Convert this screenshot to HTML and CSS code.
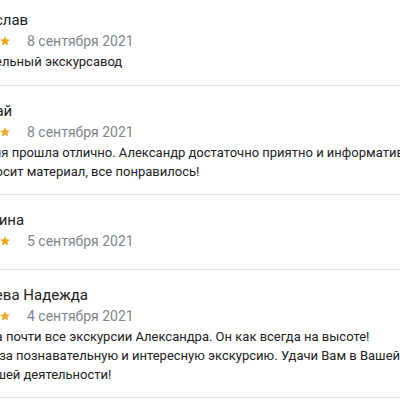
FILE: index.html
```html
<!DOCTYPE html>
<html lang="ru">
<head>
    <meta charset="UTF-8" />
    <meta name="viewport" content="width=device-width, initial-scale=1.0" />
    <title>Отзывы</title>
    <link rel="stylesheet" href="styles.css">
</head>
<body>
    <ul class="reviews">
        <li class="review review-first">
            <div class="review-name">Владислав</div>
            <div class="review-meta">
                <span class="stars">
                    <svg viewBox="0 0 24 24"><path d="M12 17.3l6.2 3.7-1.6-7 5.4-4.7-7.2-.6L12 2 9.2 8.7 2 9.3l5.4 4.7-1.6 7z"/></svg>
                    <svg viewBox="0 0 24 24"><path d="M12 17.3l6.2 3.7-1.6-7 5.4-4.7-7.2-.6L12 2 9.2 8.7 2 9.3l5.4 4.7-1.6 7z"/></svg>
                    <svg viewBox="0 0 24 24"><path d="M12 17.3l6.2 3.7-1.6-7 5.4-4.7-7.2-.6L12 2 9.2 8.7 2 9.3l5.4 4.7-1.6 7z"/></svg>
                    <svg viewBox="0 0 24 24"><path d="M12 17.3l6.2 3.7-1.6-7 5.4-4.7-7.2-.6L12 2 9.2 8.7 2 9.3l5.4 4.7-1.6 7z"/></svg>
                    <svg viewBox="0 0 24 24"><path d="M12 17.3l6.2 3.7-1.6-7 5.4-4.7-7.2-.6L12 2 9.2 8.7 2 9.3l5.4 4.7-1.6 7z"/></svg>
                </span>
                <span class="review-date">8 сентября 2021</span>
            </div>
            <p class="review-text">Замечательный экскурсавод</p>
        </li>
        <li class="review">
            <div class="review-name">Николай</div>
            <div class="review-meta">
                <span class="stars">
                    <svg viewBox="0 0 24 24"><path d="M12 17.3l6.2 3.7-1.6-7 5.4-4.7-7.2-.6L12 2 9.2 8.7 2 9.3l5.4 4.7-1.6 7z"/></svg>
                    <svg viewBox="0 0 24 24"><path d="M12 17.3l6.2 3.7-1.6-7 5.4-4.7-7.2-.6L12 2 9.2 8.7 2 9.3l5.4 4.7-1.6 7z"/></svg>
                    <svg viewBox="0 0 24 24"><path d="M12 17.3l6.2 3.7-1.6-7 5.4-4.7-7.2-.6L12 2 9.2 8.7 2 9.3l5.4 4.7-1.6 7z"/></svg>
                    <svg viewBox="0 0 24 24"><path d="M12 17.3l6.2 3.7-1.6-7 5.4-4.7-7.2-.6L12 2 9.2 8.7 2 9.3l5.4 4.7-1.6 7z"/></svg>
                    <svg viewBox="0 0 24 24"><path d="M12 17.3l6.2 3.7-1.6-7 5.4-4.7-7.2-.6L12 2 9.2 8.7 2 9.3l5.4 4.7-1.6 7z"/></svg>
                </span>
                <span class="review-date">8 сентября 2021</span>
            </div>
            <p class="review-text">Экскурсия прошла отлично. Александр достаточно приятно и информативно преподносит материал, все понравилось!</p>
        </li>
        <li class="review review-empty">
            <div class="review-name">Екатерина</div>
            <div class="review-meta">
                <span class="stars">
                    <svg viewBox="0 0 24 24"><path d="M12 17.3l6.2 3.7-1.6-7 5.4-4.7-7.2-.6L12 2 9.2 8.7 2 9.3l5.4 4.7-1.6 7z"/></svg>
                    <svg viewBox="0 0 24 24"><path d="M12 17.3l6.2 3.7-1.6-7 5.4-4.7-7.2-.6L12 2 9.2 8.7 2 9.3l5.4 4.7-1.6 7z"/></svg>
                    <svg viewBox="0 0 24 24"><path d="M12 17.3l6.2 3.7-1.6-7 5.4-4.7-7.2-.6L12 2 9.2 8.7 2 9.3l5.4 4.7-1.6 7z"/></svg>
                    <svg viewBox="0 0 24 24"><path d="M12 17.3l6.2 3.7-1.6-7 5.4-4.7-7.2-.6L12 2 9.2 8.7 2 9.3l5.4 4.7-1.6 7z"/></svg>
                    <svg viewBox="0 0 24 24"><path d="M12 17.3l6.2 3.7-1.6-7 5.4-4.7-7.2-.6L12 2 9.2 8.7 2 9.3l5.4 4.7-1.6 7z"/></svg>
                </span>
                <span class="review-date">5 сентября 2021</span>
            </div>
        </li>
        <li class="review">
            <div class="review-name">Андреева Надежда</div>
            <div class="review-meta">
                <span class="stars">
                    <svg viewBox="0 0 24 24"><path d="M12 17.3l6.2 3.7-1.6-7 5.4-4.7-7.2-.6L12 2 9.2 8.7 2 9.3l5.4 4.7-1.6 7z"/></svg>
                    <svg viewBox="0 0 24 24"><path d="M12 17.3l6.2 3.7-1.6-7 5.4-4.7-7.2-.6L12 2 9.2 8.7 2 9.3l5.4 4.7-1.6 7z"/></svg>
                    <svg viewBox="0 0 24 24"><path d="M12 17.3l6.2 3.7-1.6-7 5.4-4.7-7.2-.6L12 2 9.2 8.7 2 9.3l5.4 4.7-1.6 7z"/></svg>
                    <svg viewBox="0 0 24 24"><path d="M12 17.3l6.2 3.7-1.6-7 5.4-4.7-7.2-.6L12 2 9.2 8.7 2 9.3l5.4 4.7-1.6 7z"/></svg>
                    <svg viewBox="0 0 24 24"><path d="M12 17.3l6.2 3.7-1.6-7 5.4-4.7-7.2-.6L12 2 9.2 8.7 2 9.3l5.4 4.7-1.6 7z"/></svg>
                </span>
                <span class="review-date">4 сентября 2021</span>
            </div>
            <p class="review-text">Посетила почти все экскурсии Александра. Он как всегда на высоте! Спасибо за познавательную и интересную экскурсию. Удачи Вам в Вашей дальнейшей деятельности!</p>
        </li>
    </ul>
</body>
</html>
```

FILE: styles.css
```css
* {
    margin: 0;
    padding: 0;
    box-sizing: border-box;
}

body {
    background: #fff;
    font-family: Roboto, "Noto Sans", sans-serif;
    overflow: hidden;
}

.reviews {
    list-style: none;
    width: 472px;
    margin: -5px 0 0 -49px;
}

.review {
    padding: 14px 0 13px;
    border-bottom: 1px solid #e3e3e3;
}

.review-first {
    padding-bottom: 14px;
}

.review-empty {
    padding-bottom: 18px;
}

.review-name {
    font-size: 15px;
    line-height: 22px;
    color: #202124;
}

.review-meta {
    display: flex;
    align-items: center;
    height: 20px;
}

.stars {
    display: flex;
}

.stars svg {
    width: 12px;
    height: 12px;
    fill: #f6a823;
}

.review-date {
    margin-left: 16px;
    font-size: 14px;
    color: #80868b;
}

.review-text {
    margin: 1px 0 0 -7px;
    font-size: 13px;
    line-height: 19px;
    color: #202124;
}
```
